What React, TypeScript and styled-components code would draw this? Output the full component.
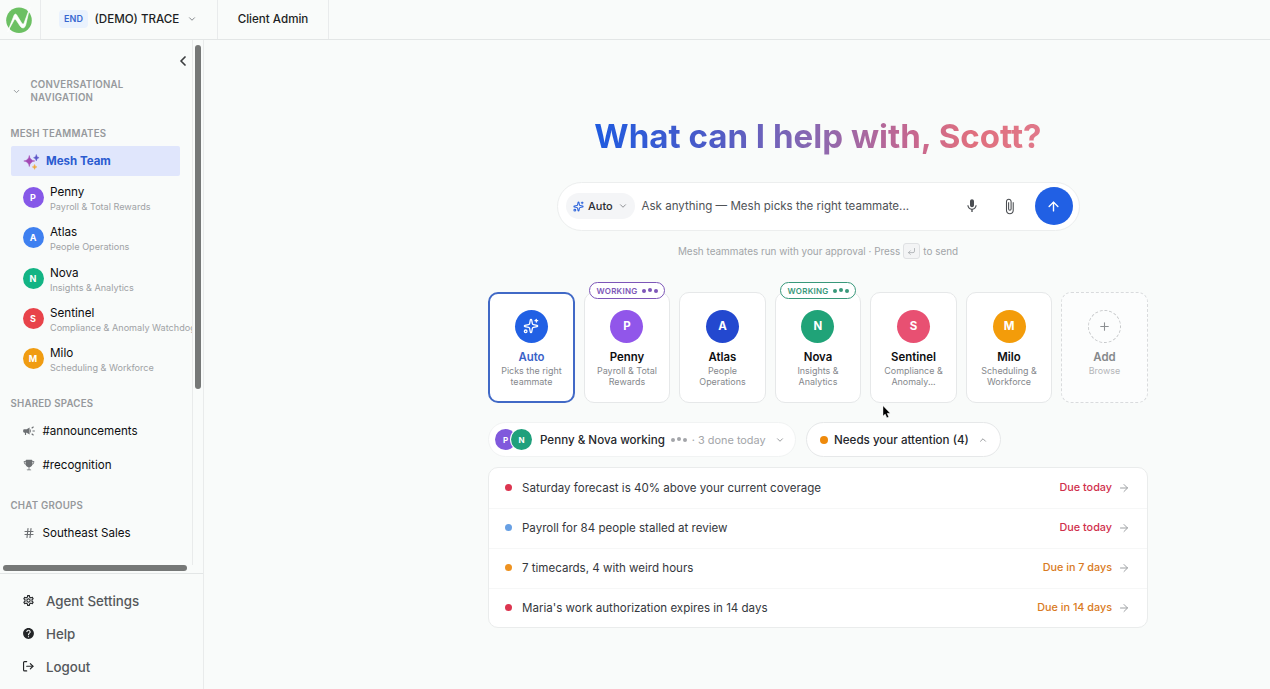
import React from "react";
import styled, { createGlobalStyle, css } from "styled-components";
import { ArrowRight, ArrowUp, ChevronDown, ChevronLeft, ChevronUp, CornerDownLeft, Hash, Plus, Sparkles } from "lucide-react";
import { MdAttachFile, MdCampaign, MdHelp, MdMic, MdOutlineSettings } from "react-icons/md";
import { FiLogOut } from "react-icons/fi";
import { IoTrophy } from "react-icons/io5";

const GlobalStyle = createGlobalStyle`
  * { box-sizing: border-box; }
  html, body { margin: 0; padding: 0; }
  body {
    width: 1270px;
    height: 689px;
    overflow: hidden;
    background: #f9fbfa;
    font-family: Inter, "Liberation Sans", sans-serif;
    color: #1d1f24;
  }
  svg { display: block; flex: none; }
`;

const Page = styled.div`
  position: relative;
  display: flex;
  flex-direction: column;
  width: 1270px;
  height: 689px;
  overflow: hidden;
`;

const TopBar = styled.header`
  display: flex;
  flex: none;
  height: 40px;
  border-bottom: 1px solid #e3e6e6;
`;

const LogoCell = styled.div`
  display: flex;
  align-items: center;
  width: 41px;
  padding-left: 5px;
  border-right: 1px solid #e9ebec;
`;

const TenantCell = styled.div`
  display: flex;
  align-items: center;
  width: 177px;
  padding: 0 0 1px 18px;
  border-right: 1px solid #e9ebec;
`;

const EndTag = styled.span`
  width: 29px;
  height: 18px;
  border-radius: 4px;
  background: #eaf2fd;
  color: #3767d0;
  font-size: 9px;
  font-weight: 600;
  line-height: 18px;
  text-align: center;
`;

const TenantName = styled.span`
  width: 85px;
  margin: 0 7px 0 6.5px;
  font-size: 11.6px;
  font-weight: 500;
  white-space: nowrap;
`;

const AdminCell = styled.div`
  width: 111px;
  border-right: 1px solid #e9ebec;
  font-size: 11.6px;
  font-weight: 500;
  line-height: 39px;
  text-align: center;
`;

const Body = styled.div`
  display: flex;
  flex: 1;
  min-height: 0;
`;

const Sidebar = styled.aside`
  display: flex;
  flex-direction: column;
  flex: none;
  width: 204px;
  border-right: 1px solid #e9ebeb;
`;

const ScrollArea = styled.div`
  display: flex;
  height: 525px;
`;

const Nav = styled.nav`
  flex: none;
  width: 193px;
  height: 525px;
  overflow: hidden;
  border-right: 1px solid #e9ebeb;
`;

const VerticalTrack = styled.div`
  flex: 1;
  padding: 5px 0 0 2px;
`;

const Thumb = styled.div<{ $w: number; $h: number }>`
  width: ${(p) => p.$w}px;
  height: ${(p) => p.$h}px;
  border-radius: 3px;
  background: #767877;
`;

const HorizontalTrack = styled.div`
  height: 9px;
  padding-left: 3px;
  border-bottom: 1px solid #e3e6e6;
`;

const CollapseRow = styled.div`
  display: flex;
  justify-content: flex-end;
  height: 38px;
  padding: 13px 1px 0 0;
  color: #3c3e40;
`;

const NavTitle = styled.div`
  display: flex;
  align-items: center;
  gap: 9.5px;
  height: 26px;
  padding-left: 12px;
  color: #96999c;
`;

const Caps = styled.div`
  color: #96999c;
  font-size: 9.7px;
  font-weight: 600;
  line-height: 13px;
  letter-spacing: 0.22px;
`;

const SectionLabel = styled(Caps)<{ $top: number }>`
  padding: ${(p) => p.$top}px 0 0 10.5px;
`;

const TeamLink = styled.div`
  display: flex;
  align-items: center;
  gap: 6px;
  width: 169px;
  height: 30px;
  margin: 6px 0 1.5px 11px;
  padding-left: 12px;
  border-radius: 2px;
  background: #e0e6fc;
  color: #2b5bd0;
  font-size: 11.5px;
  font-weight: 700;
`;

const MateRow = styled.div`
  display: flex;
  align-items: center;
  gap: 6.5px;
  height: 40.3px;
  padding-left: 22.5px;
  white-space: nowrap;
`;

const MateText = styled.div`
  padding-top: 4px;
`;

const Avatar = styled.div<{ $size: number; $color: string; $font: number }>`
  display: flex;
  align-items: center;
  justify-content: center;
  flex: none;
  width: ${(p) => p.$size}px;
  height: ${(p) => p.$size}px;
  border-radius: 50%;
  background: ${(p) => p.$color};
  color: #fff;
  font-size: ${(p) => p.$font}px;
  font-weight: 700;
`;

const MateName = styled.div`
  color: #0d0e10;
  font-size: 11.7px;
  line-height: 15px;
`;

const MateRole = styled.div`
  color: #9fa2a5;
  font-size: 9.1px;
  line-height: 14px;
`;

const SpaceRow = styled.div<{ $top?: number }>`
  display: flex;
  align-items: center;
  gap: 7.5px;
  height: 34px;
  margin-top: ${(p) => p.$top ?? 0}px;
  padding-left: 23px;
  color: #6d7073;
`;

const SpaceIcon = styled.span`
  display: flex;
  justify-content: center;
  width: 12px;
`;

const SpaceName = styled.span`
  color: #0d0e10;
  font-size: 11.6px;
`;

const FooterNav = styled.div`
  padding-top: 10.5px;
`;

const FooterLink = styled.div`
  display: flex;
  align-items: center;
  gap: 11.5px;
  height: 33px;
  padding: 0 0 1px 21.5px;
  color: #232527;
`;

const FooterIcon = styled.span`
  display: flex;
  width: 13px;
`;

const FooterText = styled.span`
  color: #55585b;
  font-size: 13.3px;
  font-weight: 500;
`;

const Main = styled.main`
  display: flex;
  flex-direction: column;
  align-items: center;
  width: 660px;
  margin-left: 284px;
`;

const Heading = styled.h1`
  height: 44px;
  margin: 75px 0 0;
  background: linear-gradient(90deg, #1f5be0 0%, #4a5bc8 25%, #8c68b0 50%, #c8688e 72%, #e0707e 85%, #e0788a 100%);
  background-clip: text;
  -webkit-background-clip: text;
  color: transparent;
  font-size: 33.1px;
  font-weight: 700;
  line-height: 43px;
  white-space: nowrap;
`;

const SearchBar = styled.div`
  display: flex;
  align-items: center;
  width: 523px;
  height: 49px;
  margin-top: 23px;
  padding: 0 6px 1px 8px;
  border: 1px solid #eceeee;
  border-radius: 25px;
  background: #fff;
`;

const ModePill = styled.div`
  display: flex;
  align-items: center;
  flex: none;
  gap: 4.5px;
  width: 69px;
  height: 26px;
  padding-left: 7px;
  border-radius: 13px;
  background: #f4f5f7;
  color: #2b2d33;
  font-size: 11px;
  font-weight: 500;
`;

const PillChevron = styled.span`
  margin-left: 1px;
  color: #85888c;
`;

const Placeholder = styled.span`
  flex: 1;
  margin-left: 7px;
  color: #505357;
  font-size: 11.57px;
  white-space: nowrap;
`;

const BarIcon = styled.span`
  display: flex;
  justify-content: center;
  width: 38px;
  color: #4a4d51;
`;

const SendButton = styled.div`
  display: flex;
  align-items: center;
  justify-content: center;
  width: 38px;
  height: 38px;
  margin-left: 6px;
  border-radius: 50%;
  background: #2160e4;
  color: #fff;
`;

const Hint = styled.div`
  display: flex;
  align-items: center;
  height: 16px;
  margin-top: 12px;
  color: #a2a5a8;
  font-size: 9.92px;
  white-space: nowrap;
`;

const Key = styled.span`
  display: flex;
  align-items: center;
  justify-content: center;
  width: 17px;
  height: 16px;
  margin: 0 3px;
  border: 1px solid #dfe1e3;
  border-radius: 3px;
  background: #f3f4f5;
`;

const Cards = styled.div`
  display: grid;
  grid-template-columns: repeat(7, 1fr);
  gap: 8.6px;
  width: 660px;
  height: 111px;
  margin-top: 33px;
`;

const Card = styled.div<{ $kind?: "active" | "add" }>`
  position: relative;
  display: flex;
  flex-direction: column;
  align-items: center;
  padding-top: 16.5px;
  border: 1px solid #e6e8e9;
  border-radius: 10px;
  background: #fff;
  ${(p) => p.$kind === "active" && css`padding-top: 15.5px; border: 2px solid #4169c6;`}
  ${(p) => p.$kind === "add" && css`border: 1px dashed #d9dbdd; background: #fcfdfd;`}
`;

const AddCircle = styled.div`
  display: flex;
  align-items: center;
  justify-content: center;
  width: 33px;
  height: 33px;
  border: 1.5px dashed #c6c8ca;
  border-radius: 50%;
  color: #8c8f92;
`;

const CardName = styled.div<{ $color: string }>`
  margin-top: 6.5px;
  color: ${(p) => p.$color};
  font-size: 11.4px;
  font-weight: 600;
  line-height: 16px;
`;

const CardRole = styled.div<{ $faint?: boolean }>`
  color: ${(p) => (p.$faint ? "#b4b6b9" : "#85888c")};
  font-size: 8.95px;
  line-height: 11.3px;
  text-align: center;
  white-space: pre-line;
`;

const WorkingBadge = styled.div<{ $color: string }>`
  position: absolute;
  top: -11px;
  left: 4.5px;
  display: flex;
  align-items: center;
  justify-content: center;
  gap: 4px;
  width: 76px;
  height: 17px;
  border: 1px solid ${(p) => p.$color};
  border-radius: 9px;
  background: #fff;
  color: ${(p) => p.$color};
  font-size: 8px;
  font-weight: 600;
  letter-spacing: 0.25px;
`;

const DotRow = styled.span`
  display: flex;
  gap: 2px;
`;

const TypingDot = styled.i<{ $rise: number }>`
  width: 4px;
  height: 4px;
  border-radius: 50%;
  background: currentColor;
  transform: translateY(${(p) => -p.$rise}px);
`;

const StatusRow = styled.div`
  display: flex;
  gap: 10px;
  width: 660px;
  height: 35px;
  margin-top: 19px;
`;

const StatusPill = styled.div<{ $w: number; $pad: number; $line: string }>`
  display: flex;
  align-items: center;
  width: ${(p) => p.$w}px;
  padding-left: ${(p) => p.$pad}px;
  border: 1px solid ${(p) => p.$line};
  border-radius: 18px;
  background: #fff;
  white-space: nowrap;
`;

const AvatarStack = styled.div`
  display: flex;
  margin-right: 8px;
  & > * + * {
    margin-left: -5px;
    box-shadow: 0 0 0 1px #fff;
  }
`;

const StatusText = styled.span`
  color: #25272c;
  font-size: 11.6px;
  font-weight: 500;
`;

const Muted = styled.span`
  display: flex;
  align-items: center;
  gap: 5px;
  margin: 0 9px 0 6px;
  color: #a3a5a9;
  font-size: 10.9px;
`;

const Chevron = styled.span`
  color: #85888c;
`;

const Dot = styled.i<{ $size: number; $color: string }>`
  flex: none;
  width: ${(p) => p.$size}px;
  height: ${(p) => p.$size}px;
  border-radius: 50%;
  background: ${(p) => p.$color};
`;

const TaskList = styled.div`
  width: 660px;
  height: 161px;
  margin-top: 10px;
  border: 1px solid #eaecec;
  border-radius: 10px;
  background: #fff;
`;

const TaskRow = styled.div`
  display: flex;
  align-items: center;
  height: 40px;
  padding: 0 17px 1px 16px;
  color: #9da0a3;
  & + & {
    padding-bottom: 2px;
    border-top: 1px solid #f6f7f7;
  }
`;

const TaskText = styled.span`
  flex: 1;
  margin-left: 10px;
  color: #35383d;
  font-size: 11.55px;
`;

const Due = styled.span<{ $color: string }>`
  margin-right: 6px;
  color: ${(p) => p.$color};
  font-size: 10.8px;
  font-weight: 500;
`;

const Pointer = styled.svg`
  position: absolute;
  left: 882px;
  top: 405px;
`;

const mates = [
  { name: "Penny", role: "Payroll & Total Rewards", color: "#8658e8" },
  { name: "Atlas", role: "People Operations", color: "#3f80f0" },
  { name: "Nova", role: "Insights & Analytics", color: "#13b484" },
  { name: "Sentinel", role: "Compliance & Anomaly Watchdog", color: "#e8434a" },
  { name: "Milo", role: "Scheduling & Workforce", color: "#f09c12" },
];

const cards = [
  { name: "Penny", role: "Payroll & Total\nRewards", color: "#9156ea", working: "#7d56b8" },
  { name: "Atlas", role: "People\nOperations", color: "#2348cf" },
  { name: "Nova", role: "Insights &\nAnalytics", color: "#20a378", working: "#38987a" },
  { name: "Sentinel", role: "Compliance &\nAnomaly...", color: "#e85072" },
  { name: "Milo", role: "Scheduling &\nWorkforce", color: "#f39c0a" },
];

const tasks = [
  { text: "Saturday forecast is 40% above your current coverage", due: "Due today", dot: "#dc3550", color: "#d02f4c" },
  { text: "Payroll for 84 people stalled at review", due: "Due today", dot: "#68a0e4", color: "#d02f4c" },
  { text: "7 timecards, 4 with weird hours", due: "Due in 7 days", dot: "#ee9220", color: "#d97a22" },
  { text: "Maria's work authorization expires in 14 days", due: "Due in 14 days", dot: "#dc3550", color: "#d97a22" },
];

const TypingDots = () => (
  <DotRow>
    <TypingDot $rise={0} />
    <TypingDot $rise={1} />
    <TypingDot $rise={0} />
  </DotRow>
);

const Logo = () => (
  <svg width="28" height="28" viewBox="0 0 28 28">
    <circle cx="14" cy="14.3" r="12.8" fill="#6cc063" />
    <path d="M2.6 25.8 L9.2 9 Q10.2 7.2 11.6 8.8 L17 17.6 Q18.2 18.8 19 17.2 L24.8 1.6 L20.6 19.4 Q18.6 24 15.4 20.4 L10.8 13.6 Q9.8 12.6 9 14.2Z" fill="#fff" stroke="#fff" strokeWidth="0.6" />
  </svg>
);

const TeamSparkle = () => (
  <svg width="17" height="17" viewBox="0 0 17 17">
    <path d="M6.3 2.5 Q6.9 7.4 11.8 8 Q6.9 8.6 6.3 13.5 Q5.7 8.6 0.8 8 Q5.7 7.4 6.3 2.5Z" fill="#a348b4" stroke="#a348b4" strokeWidth="0.5" />
    <path d="M13.3 1.4 Q13.6 4.3 16.1 4.7 Q13.6 5.1 13.3 8 Q13 5.1 10.5 4.7 Q13 4.3 13.3 1.4Z" fill="#5b55c8" stroke="#5b55c8" strokeWidth="0.4" />
    <path d="M11.6 11.4 Q11.9 13.5 14 13.9 Q11.9 14.3 11.6 16.4 Q11.3 14.3 9.2 13.9 Q11.3 13.5 11.6 11.4Z" fill="#efa83c" stroke="#efa83c" strokeWidth="0.4" />
  </svg>
);

export default function App() {
  return (
    <Page>
      <GlobalStyle />
      <TopBar>
        <LogoCell><Logo /></LogoCell>
        <TenantCell>
          <EndTag>END</EndTag>
          <TenantName>(DEMO) TRACE</TenantName>
          <Chevron><ChevronDown size={10} strokeWidth={2.4} /></Chevron>
        </TenantCell>
        <AdminCell>Client Admin</AdminCell>
      </TopBar>
      <Body>
        <Sidebar>
          <ScrollArea>
            <Nav>
              <CollapseRow><ChevronLeft size={16} strokeWidth={2.6} /></CollapseRow>
              <NavTitle>
                <ChevronDown size={9} strokeWidth={2.6} />
                <Caps>CONVERSATIONAL<br />NAVIGATION</Caps>
              </NavTitle>
              <SectionLabel $top={23}>MESH TEAMMATES</SectionLabel>
              <TeamLink><TeamSparkle />Mesh Team</TeamLink>
              {mates.map((m) => (
                <MateRow key={m.name}>
                  <Avatar $size={21} $color={m.color} $font={9}>{m.name[0]}</Avatar>
                  <MateText>
                    <MateName>{m.name}</MateName>
                    <MateRole>{m.role}</MateRole>
                  </MateText>
                </MateRow>
              ))}
              <SectionLabel $top={18}>SHARED SPACES</SectionLabel>
              <SpaceRow $top={4}><SpaceIcon><MdCampaign size={14} /></SpaceIcon><SpaceName>#announcements</SpaceName></SpaceRow>
              <SpaceRow><SpaceIcon><IoTrophy size={12} /></SpaceIcon><SpaceName>#recognition</SpaceName></SpaceRow>
              <SectionLabel $top={17}>CHAT GROUPS</SectionLabel>
              <SpaceRow $top={4}><SpaceIcon><Hash size={12} strokeWidth={2.3} /></SpaceIcon><SpaceName>Southeast Sales</SpaceName></SpaceRow>
            </Nav>
            <VerticalTrack><Thumb $w={6} $h={344} /></VerticalTrack>
          </ScrollArea>
          <HorizontalTrack><Thumb $w={184} $h={6} /></HorizontalTrack>
          <FooterNav>
            <FooterLink><FooterIcon><MdOutlineSettings size={13} /></FooterIcon><FooterText>Agent Settings</FooterText></FooterLink>
            <FooterLink><FooterIcon><MdHelp size={13} /></FooterIcon><FooterText>Help</FooterText></FooterLink>
            <FooterLink><FooterIcon><FiLogOut size={12.5} strokeWidth={2.2} /></FooterIcon><FooterText>Logout</FooterText></FooterLink>
          </FooterNav>
        </Sidebar>
        <Main>
          <Heading>What can I help with, Scott?</Heading>
          <SearchBar>
            <ModePill>
              <Sparkles size={11} color="#2f66dc" strokeWidth={2.3} />
              Auto
              <PillChevron><ChevronDown size={10} strokeWidth={2.2} /></PillChevron>
            </ModePill>
            <Placeholder>Ask anything — Mesh picks the right teammate...</Placeholder>
            <BarIcon><MdMic size={16} /></BarIcon>
            <BarIcon><MdAttachFile size={17} /></BarIcon>
            <SendButton><ArrowUp size={15} strokeWidth={2.2} /></SendButton>
          </SearchBar>
          <Hint>
            Mesh teammates run with your approval · Press
            <Key><CornerDownLeft size={9} /></Key>
            to send
          </Hint>
          <Cards>
            <Card $kind="active">
              <Avatar $size={33} $color="#2160e4" $font={12}><Sparkles size={16} strokeWidth={1.9} /></Avatar>
              <CardName $color="#3a62c8">Auto</CardName>
              <CardRole>{"Picks the right\nteammate"}</CardRole>
            </Card>
            {cards.map((c) => (
              <Card key={c.name}>
                {c.working && <WorkingBadge $color={c.working}>WORKING<TypingDots /></WorkingBadge>}
                <Avatar $size={33} $color={c.color} $font={11.5}>{c.name[0]}</Avatar>
                <CardName $color="#0d0e10">{c.name}</CardName>
                <CardRole>{c.role}</CardRole>
              </Card>
            ))}
            <Card $kind="add">
              <AddCircle><Plus size={13} /></AddCircle>
              <CardName $color="#85888b">Add</CardName>
              <CardRole $faint>Browse</CardRole>
            </Card>
          </Cards>
          <StatusRow>
            <StatusPill $w={308} $pad={6} $line="#f1f3f3">
              <AvatarStack>
                <Avatar $size={21} $color="#8059dc" $font={8}>P</Avatar>
                <Avatar $size={21} $color="#20a07c" $font={8}>N</Avatar>
              </AvatarStack>
              <StatusText>Penny &amp; Nova working</StatusText>
              <Muted><TypingDots />· 3 done today</Muted>
              <Chevron><ChevronDown size={10} /></Chevron>
            </StatusPill>
            <StatusPill $w={195} $pad={13} $line="#e6e8e9">
              <Dot $size={8} $color="#ee8a0c" />
              <Muted><StatusText>Needs your attention (4)</StatusText></Muted>
              <Chevron><ChevronUp size={10} /></Chevron>
            </StatusPill>
          </StatusRow>
          <TaskList>
            {tasks.map((t) => (
              <TaskRow key={t.text}>
                <Dot $size={7} $color={t.dot} />
                <TaskText>{t.text}</TaskText>
                <Due $color={t.color}>{t.due}</Due>
                <ArrowRight size={12} />
              </TaskRow>
            ))}
          </TaskList>
        </Main>
      </Body>
      <Pointer width="9" height="14" viewBox="0 0 9 14">
        <path d="M1 0.8 V11 L3.2 9 L4.9 12.8 L6.7 12 L5.1 8.3 H8.2Z" fill="#000" stroke="#fff" strokeWidth="0.4" />
      </Pointer>
    </Page>
  );
}
